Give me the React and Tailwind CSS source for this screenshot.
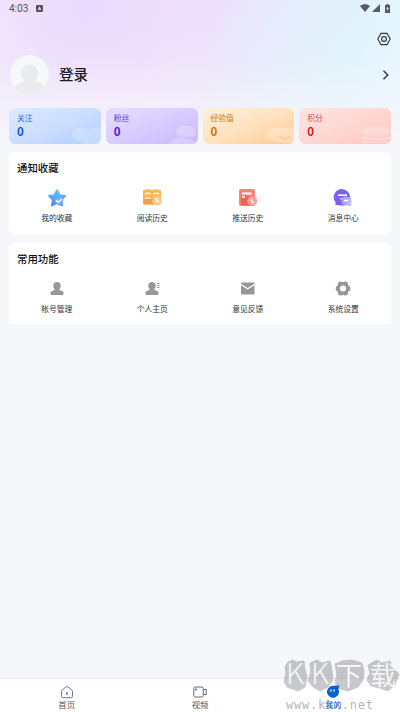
import React from "react";

const stats = [
  { label: "关注", card: "from-[#deeaff] via-[#cbdeff] to-[#b0ceff]", text: "text-[#2f6bdc]", num: "text-[#1450dc]", art: "cloud" },
  { label: "粉丝", card: "from-[#e6deff] via-[#d8ccff] to-[#c7b8ff]", text: "text-[#6c3bd6]", num: "text-[#5416cf]", art: "people" },
  { label: "经验值", card: "from-[#fff0dc] via-[#ffe2be] to-[#ffcb94]", text: "text-[#cc812d]", num: "text-[#c8740c]", art: "badge" },
  { label: "积分", card: "from-[#ffe5e2] via-[#ffd7d3] to-[#ffc6c0]", text: "text-[#d2473f]", num: "text-[#c9201a]", art: "coins" },
];

function StatArt({ type }) {
  return (
    <svg className="absolute right-0 bottom-0 h-[20px] w-[34px]" viewBox="0 0 34 20" fill="#fff">
      {type === "cloud" && (
        <path opacity=".22" d="M5 10c0-4 4-6 9-6 4 0 6 1 8 2 3-2 7-3 12-3v17H19C10 18 5 14 5 10Z" />
      )}
      {type === "people" && (
        <g opacity=".24">
          <rect x="12" y="2" width="20" height="11" rx="5.5" />
          <path d="M5 20c2-4 8-6 14-6 5 0 10 1 12 4v2Z" />
        </g>
      )}
      {type === "badge" && (
        <path opacity=".28" fillRule="evenodd" d="M12 4h22v13c-6 2-13 2-21 0L5 13Zm5 8 8 5 7-5-2-1-5 3-5-3Z" />
      )}
      {type === "coins" && (
        <g opacity=".26">
          <path d="M5 7c0-5 29-5 29-1v4c-8 3-29 2-29-3Z" />
          <path d="M5 11c5 3 19 4 29 1v3c-10 2-24 2-29-1Z" />
          <path d="M5 16c7 2 20 3 29 1v2H5Z" />
        </g>
      )}
    </svg>
  );
}

function StarIcon() {
  return (
    <svg className="h-5 w-5" viewBox="0 0 20 20">
      <defs>
        <linearGradient id="star" x1="0" y1="0" x2="0" y2="1">
          <stop stopColor="#62c5fb" />
          <stop offset="1" stopColor="#4a86f8" />
        </linearGradient>
      </defs>
      <path d="m10 2 2.700 5 5.500.9-4 4 1 5.600-5.200-2.400-5.200 2.400 1-5.600-4-4L7.300 7Z" fill="url(#star)" stroke="url(#star)" strokeWidth="1.600" strokeLinejoin="round" />
      <circle cx="12" cy="12.700" r="4.600" fill="#7fb2ff" opacity=".7" />
      <path d="m9 12.300 2.200 2 3.500-3.300" fill="none" stroke="#fff" strokeWidth="1.500" />
    </svg>
  );
}

function BookIcon() {
  return (
    <svg className="h-5 w-5" viewBox="0 0 20 20">
      <path d="M1 2.500C4 .8 7.500.8 10 2.300c3-1.500 6-1.500 9 .2V15c0 1-.8 1.500-2 1.500H3c-1.200 0-2-.5-2-1.500Z" fill="#fbb659" />
      <path d="M1 10.500h17V15c0 1-.8 1.500-2 1.500H3c-1.200 0-2-.5-2-1.500Z" fill="#f9994b" />
      <path d="M3 6.200c1.500-1.100 4-1.100 5.500 0M11.500 6.200c1.500-1.100 4-1.100 5.500 0M3 10.800c1.500-1.100 4-1.100 5.500 0" fill="none" stroke="#fff" strokeWidth="1.300" />
      <circle cx="15" cy="12.800" r="4.800" fill="#ffc989" />
      <path d="M14.500 10.200v3l2.500 1.200" fill="none" stroke="#fff" strokeWidth="1.400" />
    </svg>
  );
}

function PushIcon() {
  return (
    <svg className="h-5 w-5" viewBox="0 0 20 20">
      <rect x="1" y="1" width="16" height="17" rx="2" fill="#fb8078" />
      <path d="M3 8h12v9H3Z" fill="#f45f58" />
      <path d="M4 5.500h9.500M4 9.200h3" stroke="#fff" strokeWidth="1.800" />
      <circle cx="14.200" cy="13" r="5" fill="#ff9d9a" />
      <path d="M13.500 10.300v3l2.700 1.500" fill="none" stroke="#fff" strokeWidth="1.500" />
    </svg>
  );
}

function MessageIcon() {
  return (
    <svg className="h-5 w-5" viewBox="0 0 20 20">
      <path d="M9.300 1a8.300 8.300 0 1 1-3 16.200L2.300 17l.3-2.500A8.300 8.300 0 0 1 9.300 1Z" fill="#7d61f3" />
      <path d="M5 7.200h9" stroke="#fff" strokeWidth="1.600" />
      <path d="M7 10.700h3" stroke="#d8ceff" strokeWidth="1.300" />
      <path d="M13.500 8.500c3 0 5 2 5 4.500 0 1.300-.5 2.300-.8 3l.8 2.300-3.500-.5c-4 .5-6.500-1.800-6.500-4.700s2-4.600 5-4.600Z" fill="#b3b0ff" opacity=".85" />
      <path d="M11 12.500h4.500" stroke="#fff" strokeWidth="1.600" />
    </svg>
  );
}

function UserIcon({ list = false }) {
  return (
    <svg className="h-5 w-5" viewBox="0 0 20 20" fill="#979797">
      <path d="M10 3c2.400 0 3.700 1.400 3.700 3.500 0 1.600-.5 2.900-1.300 3.800v.8l2.600.9c1 .4 1.500 1 1.500 2v1c0 .5-.3.900-.8.900H4.300c-.5 0-.8-.4-.8-.9v-1c0-1 .5-1.600 1.500-2l2.600-.9v-.8c-.8-.9-1.300-2.200-1.300-3.800C6.300 4.400 7.600 3 10 3Z" />
      {list && <path d="M15 4h2.600v1H15Zm0 2h2.600v1H15Zm0 2h2.600v1H15Z" />}
    </svg>
  );
}

function MailIcon() {
  return (
    <svg className="h-5 w-5" viewBox="0 0 20 20">
      <rect x="3" y="3.500" width="13.500" height="12" rx="1" fill="#979797" />
      <path d="m3 5.500 6.700 4.300 6.800-4.300" fill="none" stroke="#fff" strokeWidth="1.200" />
    </svg>
  );
}

function GearIcon() {
  return (
    <svg className="h-5 w-5" viewBox="0 0 20 20">
      <g fill="#979797">
        <circle cx="10" cy="9.500" r="6.300" />
        <circle cx="14.400" cy="9.500" r="2.900" />
        <circle cx="5.600" cy="9.500" r="2.900" />
        <circle cx="12.400" cy="5.300" r="2.700" />
        <circle cx="7.600" cy="5.300" r="2.700" />
        <circle cx="12.400" cy="13.700" r="2.700" />
        <circle cx="7.600" cy="13.700" r="2.700" />
      </g>
      <circle cx="10" cy="9.500" r="3" fill="#fff" />
    </svg>
  );
}

const notices = [
  { label: "我的收藏", icon: <StarIcon /> },
  { label: "阅读历史", icon: <BookIcon /> },
  { label: "推送历史", icon: <PushIcon /> },
  { label: "消息中心", icon: <MessageIcon /> },
];

const tools = [
  { label: "帐号管理", icon: <UserIcon /> },
  { label: "个人主页", icon: <UserIcon list /> },
  { label: "意见反馈", icon: <MailIcon /> },
  { label: "系统设置", icon: <GearIcon /> },
];

function StatusBar() {
  return (
    <div className="flex h-4 items-center px-[9px] text-[#555361]">
      <span className="pt-px font-['Roboto',sans-serif] text-[10px] leading-4">4:03</span>
      <svg className="ml-2 h-[7px] w-[7px]" viewBox="0 0 7 7">
        <rect width="7" height="7" rx="1" fill="#555361" />
        <path d="M3.500 1.300 5.200 5H4L3.500 4.300 3 5H1.800Z" fill="#eee6ff" />
      </svg>
      <div className="ml-auto flex items-center gap-[2px]">
        <svg className="h-2 w-[10px]" viewBox="0 0 10 8" fill="#555b62">
          <path d="M0 2C3-.5 7-.5 10 2L5 8Z" />
        </svg>
        <svg className="h-2 w-2" viewBox="0 0 8 8" fill="#555b62">
          <path d="M8 0v8H0Z" />
        </svg>
        <svg className="mr-px ml-[3px] h-[9px] w-[5px]" viewBox="0 0 5 9">
          <path d="M1.500 0h2v1H5v8H0V1h1.500Z" fill="#555b62" />
          <path d="M2.900 2.500 1.300 5h1l-.2 2 1.600-2.700h-1Z" fill="#fff" />
        </svg>
      </div>
    </div>
  );
}

function Panel({ title, items, className }) {
  return (
    <section className={`rounded-[6px] bg-white ${className}`}>
      <h2 className="pt-[6px] pl-[8px] text-[10.400px] leading-5 font-medium text-[#111]">{title}</h2>
      <div className="mt-[10px] grid grid-cols-4">
        {items.map((item) => (
          <div key={item.label} className="flex flex-col items-center">
            {item.icon}
            <span className="mt-[4px] text-[7.800px] leading-3 text-[#333]">{item.label}</span>
          </div>
        ))}
      </div>
    </section>
  );
}

function Watermark() {
  return (
    <div className="pointer-events-none absolute top-[658px] left-[283px] h-[54px] w-[117px]">
      <svg className="h-[54px] w-[117px] overflow-visible" viewBox="0 0 117 54">
        <g fill="#777b80" stroke="#777b80" strokeWidth="1" strokeLinejoin="round" opacity=".4">
          <path d="M5 4 10 2 13 4 21 3 22 12 24 19 22 29 15 33 4 29 1 23 3 15 2 9Z" />
          <path d="M27 5 34 2 39 5 47 3 49 12 50 22 45 29 37 33 30 29 25 23 28 14Z" />
          <path d="M52 6 59 3 69 2 79 5 81 13 80 22 75 29 65 33 54 30 52 23 54 17Z" />
          <path d="M85 7 94 2 99 5 107 3 110 10 116 16 112 27 105 33 97 30 88 28 84 22 87 15Z" />
        </g>
        <g fill="#f5f5f6" fontFamily="'Noto Sans CJK SC', sans-serif">
          <text x="3" y="26" fontSize="28" fontWeight="300" textLength="18" lengthAdjust="spacingAndGlyphs">K</text>
          <text x="28" y="26" fontSize="28" fontWeight="300" textLength="18" lengthAdjust="spacingAndGlyphs">K</text>
          <text x="53" y="27" fontSize="26">下</text>
          <text x="87" y="27" fontSize="26">载</text>
        </g>
        <text x="3" y="51" fill="#8d9196" fillOpacity=".7" fontFamily="'DejaVu Sans Mono', monospace" fontSize="12" textLength="87">www.kkx.net</text>
      </svg>
    </div>
  );
}

function BottomNav() {
  return (
    <nav className="grid h-[33px] grid-cols-3 bg-white text-[8.300px] text-[#555] shadow-[0_-1px_2px_rgba(0,0,0,0.05)]">
      <div className="flex flex-col items-center pt-[6px]">
        <svg className="h-[14px] w-[14px]" viewBox="0 0 14 14" fill="none">
          <path d="M1.500 6.200c0-.4.200-.7.500-1l4.200-3.400c.5-.4 1.100-.4 1.600 0L12 5.200c.3.300.5.600.5 1v5.200c0 .8-.5 1.300-1.300 1.300H2.800c-.8 0-1.300-.5-1.300-1.300Z" stroke="#72767d" strokeWidth="1" />
          <path d="M7 7v3" stroke="#1674ed" strokeWidth="1.300" />
        </svg>
        <span className="-mt-px leading-3">首页</span>
      </div>
      <div className="flex flex-col items-center pt-[6px]">
        <svg className="h-[14px] w-[14px]" viewBox="0 0 14 14" fill="none">
          <rect x=".8" y="2" width="9.500" height="10" rx="1.500" stroke="#656970" strokeWidth="1" />
          <path d="m10.500 5 2.700-1v6l-2.700-1" stroke="#656970" strokeWidth="1" />
          <circle cx="3" cy="4.500" r="1" fill="#1674ed" />
        </svg>
        <span className="-mt-px leading-3">视频</span>
      </div>
      <div className="relative z-10 flex flex-col items-center pt-[6px] text-[#0862d0]">
        <svg className="h-[14px] w-[14px]" viewBox="0 0 14 14">
          <path d="M6.500.8 13.500.6 12.300 4a6 6 0 1 1-5.800-3.200Z" fill="#0862d0" />
          <path d="M5 4.500v2M8 4.500v2" stroke="#fff" strokeWidth="1.300" />
        </svg>
        <span className="-mt-px leading-3">我的</span>
      </div>
    </nav>
  );
}

export default function App() {
  return (
    <div className="relative flex h-[712px] w-[400px] flex-col overflow-hidden bg-[#f6f7fa] bg-[linear-gradient(to_bottom,rgba(246,247,250,0)_0px,rgba(246,247,250,0.1)_60px,rgba(246,247,250,0.55)_100px,rgba(246,247,250,0.8)_130px),radial-gradient(circle_at_85px_10px,rgba(230,217,255,0.8)_0px,rgba(230,217,255,0)_90px),linear-gradient(105deg,#efe4fc_0px,#efe0fb_160px,#ece2fb_210px,#e4edfb_290px,#e0f2fc_350px,#e8f7fe_420px)] bg-[length:400px_130px] bg-no-repeat font-['Noto_Sans_CJK_SC','Noto_Sans',sans-serif]">
      <StatusBar />
      <header>
        <div className="flex h-[39px] items-end justify-end pr-[9px] pb-[9px]">
          <svg className="h-[14px] w-[14px]" viewBox="0 0 14 14" fill="none" stroke="#33383d" strokeWidth="1.200">
            <path d="M4 1.300h6L13.200 7 10 12.700H4L.8 7Z" strokeLinejoin="round" />
            <circle cx="7" cy="7" r="2.400" />
          </svg>
        </div>
        <div className="flex h-[39px] items-center pr-[10px] pl-[10px]">
          <svg className="h-[39px] w-[39px] rounded-full" viewBox="0 0 39 39">
            <circle cx="19.500" cy="19.500" r="19.500" fill="#f6f8fa" />
            <g fill="#e9ebef">
              <circle cx="19.500" cy="18" r="8.800" />
              <path d="M15 24h9v2c5 1 8 3 11 6v7H4v-7c3-3 6-5 11-6Z" />
            </g>
          </svg>
          <h1 className="-mt-0.5 ml-[10px] text-[14.500px] leading-5 font-medium text-[#1c1a22]">登录</h1>
          <svg className="ml-auto h-[10px] w-[10px]" viewBox="0 0 10 10" fill="none" stroke="#30363b" strokeWidth="1.400">
            <path d="m3.500.8 4.300 4.200-4.300 4.200" />
          </svg>
        </div>
      </header>
      <main className="flex flex-1 flex-col px-[9px] pt-[13.500px]">
        <div className="grid grid-cols-4 gap-[5px]">
          {stats.map((item) => (
            <div key={item.label} className={`relative h-[36.500px] overflow-hidden rounded-[6px] bg-linear-to-br pt-[4px] pl-[8px] ${item.card}`}>
              <StatArt type={item.art} />
              <div className={`text-[7.800px] leading-[11px] ${item.text}`}>{item.label}</div>
              <div className={`mt-px font-['Noto_Sans_CJK_SC',sans-serif] text-[11.500px] leading-[15px] font-bold ${item.num}`}>0</div>
            </div>
          ))}
        </div>
        <Panel title="通知收藏" items={notices} className="mt-2 h-[83px]" />
        <Panel title="常用功能" items={tools} className="mt-2 h-[80.500px]" />
      </main>
      <BottomNav />
      <Watermark />
    </div>
  );
}
